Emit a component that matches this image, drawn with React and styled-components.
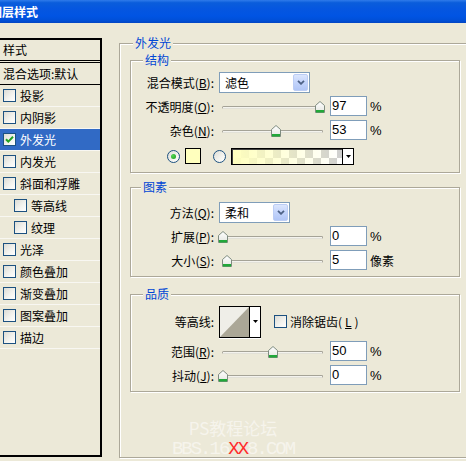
import React from 'react';
import styled, { createGlobalStyle } from 'styled-components';

const CJK = '"Noto Sans CJK SC", "Liberation Sans", sans-serif';
const LATIN = '"Liberation Sans", Arial, sans-serif';

const GlobalStyle = createGlobalStyle`
  html, body {
    margin: 0;
    padding: 0;
    background: #ECE9D8;
  }
  body {
    width: 466px;
    height: 461px;
    overflow: hidden;
    font-family: ${CJK};
    font-size: 12px;
    color: #000;
  }
`;

const Window = styled.div`
  width: 466px;
  height: 461px;
  overflow: hidden;
  background: #ECE9D8;
`;

const TitleBar = styled.div`
  height: 23px;
  line-height: 23px;
  background: linear-gradient(to bottom, #2F7BEA 0%, #0A5DDB 12%, #0556E0 40%, #0054E3 70%, #004FD6 90%, #0345C2 100%);
  color: #fff;
  font-weight: bold;
  font-size: 12px;
  white-space: nowrap;
  text-indent: -10px;
`;

const Body = styled.div`
  display: flex;
  align-items: flex-start;
`;

/* ---------- left list ---------- */

const StyleList = styled.div`
  width: 102px;
  height: 419px;
  margin-top: 15px;
  box-sizing: border-box;
  border-top: 2px solid #000;
  border-right: 2px solid #000;
  border-bottom: 2px solid #000;
  flex-shrink: 0;
  display: flex;
  flex-direction: column;
`;

const ListHeader = styled.div`
  height: 20px;
  line-height: 20px;
  padding-left: 3px;
  border-bottom: 3px double #000;
`;

const BlendRow = styled.div`
  height: 21px;
  line-height: 21px;
  padding-left: 3px;
  border-bottom: 1px solid #000;
  white-space: nowrap;
`;

const StyleItem = styled.div`
  height: 21px;
  border-bottom: 1px solid #F8F7F2;
  display: flex;
  align-items: center;
  gap: 4px;
  padding-left: ${p => (p.$indent ? 14 : 3)}px;
  background: ${p => (p.$active ? '#316AC5' : 'transparent')};
  color: ${p => (p.$active ? '#fff' : '#000')};
  white-space: nowrap;
`;

const Box = styled.span`
  width: 13px;
  height: 13px;
  box-sizing: border-box;
  border: 1px solid #1C5180;
  background: linear-gradient(135deg, #DCDCD5 0%, #F4F4F0 60%, #FFFFFF 100%);
  display: inline-flex;
  align-items: center;
  justify-content: center;
  flex-shrink: 0;
`;

const CheckBox = ({ checked }) => (
  <Box>
    {checked && (
      <svg width="11" height="11" viewBox="0 0 11 11">
        <path d="M2 5.2 L4.3 7.6 L9 2.8" fill="none" stroke="#21A121" strokeWidth="2" />
      </svg>
    )}
  </Box>
);

/* ---------- group boxes ---------- */

const GroupBox = styled.div`
  position: relative;
  box-sizing: border-box;
  width: ${p => p.$w}px;
  ${p => (p.$h ? `height: ${p.$h}px;` : '')}
  margin-top: ${p => p.$mt || 0}px;
  padding: ${p => p.$pad};
  border: 1px solid #ACA899;
  box-shadow: inset 1px 1px 0 #fff, 1px 1px 0 #fff;
  flex-shrink: 0;
`;

const GroupTitle = styled.span`
  position: absolute;
  top: -8px;
  left: ${p => p.$left}px;
  padding: 0 2px;
  line-height: 14px;
  background: #ECE9D8;
  color: #0046D5;
  white-space: nowrap;
`;

const RightPane = styled.div`
  margin-left: 17px;
  flex-shrink: 0;
`;

const Row = styled.div`
  display: flex;
  align-items: center;
  height: ${p => p.$h || 24}px;
  padding-left: ${p => p.$indent || 0}px;
  margin-top: ${p => p.$mt || 0}px;
`;

const Label = styled.span`
  width: 83px;
  margin-right: 5px;
  text-align: right;
  white-space: nowrap;
  flex-shrink: 0;
`;

/* ---------- controls ---------- */

const SelectBox = styled.div`
  width: ${p => p.$w}px;
  height: 21px;
  box-sizing: border-box;
  border: 1px solid #7F9DB9;
  background: #fff;
  display: flex;
  align-items: center;
  justify-content: space-between;
  padding: 0 1px 0 5px;
  flex-shrink: 0;
`;

const DropButton = styled.span`
  width: 15px;
  height: 17px;
  box-sizing: border-box;
  border: 1px solid #BCCDF5;
  border-radius: 2px;
  background: linear-gradient(to bottom, #DCE6FD 0%, #C3D4FB 50%, #B1C6F7 100%);
  display: flex;
  align-items: center;
  justify-content: center;
`;

const Select = ({ w, value }) => (
  <SelectBox $w={w}>
    <span>{value}</span>
    <DropButton>
      <svg width="8" height="5" viewBox="0 0 8 5">
        <path d="M1 0.8 L4 3.8 L7 0.8" fill="none" stroke="#4D6185" strokeWidth="1.8" />
      </svg>
    </DropButton>
  </SelectBox>
);

const SliderWrap = styled.div`
  position: relative;
  width: 111px;
  height: 14px;
  box-sizing: border-box;
  padding: 7px 0 0 3px;
  flex-shrink: 0;
`;

const Track = styled.div`
  width: 101px;
  height: 3px;
  box-sizing: border-box;
  border: 1px solid #A5A397;
  border-bottom-color: #E2E1D8;
  border-radius: 2px;
  background: #F4F3EE;
`;

const Thumb = styled.svg`
  position: absolute;
  top: 2px;
`;

const Slider = ({ pos }) => (
  <SliderWrap>
    <Track />
    <Thumb width="10" height="12" viewBox="0 0 10 12" style={{ left: pos - 1 }}>
      <defs>
        <linearGradient id="thumbFill" x1="0" y1="0" x2="0" y2="1">
          <stop offset="0" stopColor="#FFFFFF" />
          <stop offset="1" stopColor="#E4E6E0" />
        </linearGradient>
      </defs>
      <path d="M0.5 11.5 V4.5 L5 0.5 L9.5 4.5 V11.5 Z" fill="url(#thumbFill)" stroke="#7F8C80" />
      <rect x="1" y="9" width="8" height="2.5" fill="#21A839" />
    </Thumb>
  </SliderWrap>
);

const NumberBox = styled.div`
  width: 37px;
  height: 20px;
  box-sizing: border-box;
  border: 1px solid #7F9DB9;
  background: #fff;
  font-family: ${LATIN};
  font-size: 13px;
  line-height: 18px;
  padding-left: 1px;
  flex-shrink: 0;
`;

const Unit = styled.span`
  margin-left: 3px;
  font-family: ${p => (p.$cjk ? CJK : LATIN)};
  font-size: ${p => (p.$cjk ? 12 : 13)}px;
  white-space: nowrap;
`;

const RadioDot = styled.span`
  width: 13px;
  height: 13px;
  box-sizing: border-box;
  border-radius: 50%;
  border: 1px solid #1C5180;
  background: linear-gradient(135deg, #DCDCD5 0%, #F6F6F2 65%, #FFFFFF 100%);
  display: inline-flex;
  align-items: center;
  justify-content: center;
  flex-shrink: 0;
  margin-left: ${p => p.$ml || 0}px;
  margin-right: 5px;

  &::after {
    content: '';
    display: ${p => (p.$on ? 'block' : 'none')};
    width: 5px;
    height: 5px;
    border-radius: 50%;
    background: radial-gradient(circle at 35% 35%, #55D655, #1A9A1A);
  }
`;

const Swatch = styled.span`
  width: 16px;
  height: 16px;
  box-sizing: border-box;
  border: 1px solid #000;
  background: #FFFFBE;
  flex-shrink: 0;
`;

const GradientPicker = styled.div`
  display: flex;
  width: 123px;
  height: 17px;
  box-sizing: border-box;
  border: 1px solid #000;
  box-shadow: inset 1px 1px 0 #404040;
  flex-shrink: 0;
`;

const GradientFill = styled.div`
  flex: 1;
  margin: 1px 0 0 1px;
  background-image:
    linear-gradient(to right, #FFFFBE 0%, rgba(255, 255, 190, 0.55) 45%, rgba(255, 255, 190, 0) 100%),
    conic-gradient(#CFCFCF 25%, #FFFFFF 0 50%, #CFCFCF 0 75%, #FFFFFF 0);
  background-size: 100% 100%, 16px 16px;
`;

const SmallDrop = styled.span`
  width: 11px;
  box-sizing: border-box;
  border-left: 1px solid #000;
  background: #fff;
  display: flex;
  align-items: center;
  justify-content: center;
`;

const Arrow = () => (
  <svg width="5" height="3" viewBox="0 0 5 3">
    <path d="M0 0 H5 L2.5 3 Z" fill="#000" />
  </svg>
);

const ContourBox = styled.div`
  display: flex;
  width: 42px;
  height: 32px;
  box-sizing: border-box;
  border: 1px solid #000;
  box-shadow: 0 1px 0 #fff;
  flex-shrink: 0;
`;

const ContourPreview = styled.svg`
  display: block;
  flex: 1;
`;

const CheckLabel = styled.span`
  display: flex;
  align-items: center;
  gap: 3px;
  margin-left: 13px;
  white-space: nowrap;
`;

const Watermark = styled.div`
  width: 206px;
  margin-top: 26px;
  text-align: center;
  color: #F6F4EC;
  white-space: nowrap;
`;

const WaterLine = styled.div`
  font-family: ${p => (p.$mono ? '"Liberation Mono", monospace' : CJK)};
  font-size: ${p => (p.$mono ? 19 : 17)}px;
  line-height: ${p => (p.$mono ? 22 : 20)}px;
  letter-spacing: ${p => (p.$mono ? -2 : 0)}px;
`;

const Red = styled.span`
  color: #FF2B2B;
`;

const listItems = [
  { name: '投影' },
  { name: '内阴影' },
  { name: '外发光', checked: true, active: true },
  { name: '内发光' },
  { name: '斜面和浮雕' },
  { name: '等高线', indent: true },
  { name: '纹理', indent: true },
  { name: '光泽' },
  { name: '颜色叠加' },
  { name: '渐变叠加' },
  { name: '图案叠加' },
  { name: '描边' },
];

const SliderRow = ({ label, mnemonic, pos, value, unit, cjk }) => (
  <Row>
    <Label>
      {label}(<u>{mnemonic}</u>):
    </Label>
    <Slider pos={pos} />
    <NumberBox>{value}</NumberBox>
    <Unit $cjk={cjk}>{unit}</Unit>
  </Row>
);

export default function App() {
  return (
    <Window>
      <GlobalStyle />
      <TitleBar>图层样式</TitleBar>
      <Body>
        <StyleList>
          <ListHeader>样式</ListHeader>
          <BlendRow>混合选项:默认</BlendRow>
          {listItems.map(item => (
            <StyleItem key={item.name} $indent={item.indent} $active={item.active}>
              <CheckBox checked={item.checked} />
              {item.name}
            </StyleItem>
          ))}
        </StyleList>

        <RightPane>
          <GroupBox $w={360} $h={415} $mt={20} $pad="16px 0 0 10px">
            <GroupTitle $left={13}>外发光</GroupTitle>

            <GroupBox $w={330} $pad="9px 0 4px 0">
              <GroupTitle $left={12}>结构</GroupTitle>
              <Row>
                <Label>混合模式(<u>B</u>):</Label>
                <Select w={91} value="滤色" />
              </Row>
              <SliderRow label="不透明度" mnemonic="O" pos={97} value="97" unit="%" />
              <SliderRow label="杂色" mnemonic="N" pos={53} value="53" unit="%" />
              <Row $indent={36} $mt={2}>
                <RadioDot $on />
                <Swatch />
                <RadioDot $ml={12} />
                <GradientPicker>
                  <GradientFill />
                  <SmallDrop>
                    <Arrow />
                  </SmallDrop>
                </GradientPicker>
              </Row>
            </GroupBox>

            <GroupBox $w={330} $mt={14} $pad="12px 0 4px 0">
              <GroupTitle $left={10}>图素</GroupTitle>
              <Row>
                <Label>方法(<u>Q</u>):</Label>
                <Select w={71} value="柔和" />
              </Row>
              <SliderRow label="扩展" mnemonic="P" pos={0} value="0" unit="%" />
              <SliderRow label="大小" mnemonic="S" pos={4} value="5" unit="像素" cjk />
            </GroupBox>

            <GroupBox $w={330} $mt={17} $pad="9px 0 4px 0">
              <GroupTitle $left={12}>品质</GroupTitle>
              <Row $h={35}>
                <Label>等高线:</Label>
                <ContourBox>
                  <ContourPreview viewBox="0 0 29 30" preserveAspectRatio="none">
                    <rect x="0" y="0" width="29" height="30" fill="#EFEEE8" />
                    <path d="M0 30 L29 0 V30 Z" fill="#ABA797" />
                  </ContourPreview>
                  <SmallDrop>
                    <Arrow />
                  </SmallDrop>
                </ContourBox>
                <CheckLabel>
                  <CheckBox />
                  消除锯齿(<u>L</u>)
                </CheckLabel>
              </Row>
              <SliderRow label="范围" mnemonic="R" pos={50} value="50" unit="%" />
              <SliderRow label="抖动" mnemonic="J" pos={0} value="0" unit="%" />
            </GroupBox>

            <Watermark>
              <WaterLine>PS教程论坛</WaterLine>
              <WaterLine $mono>
                BBS.16<Red>XX</Red>8.COM
              </WaterLine>
            </Watermark>
          </GroupBox>
        </RightPane>
      </Body>
    </Window>
  );
}
